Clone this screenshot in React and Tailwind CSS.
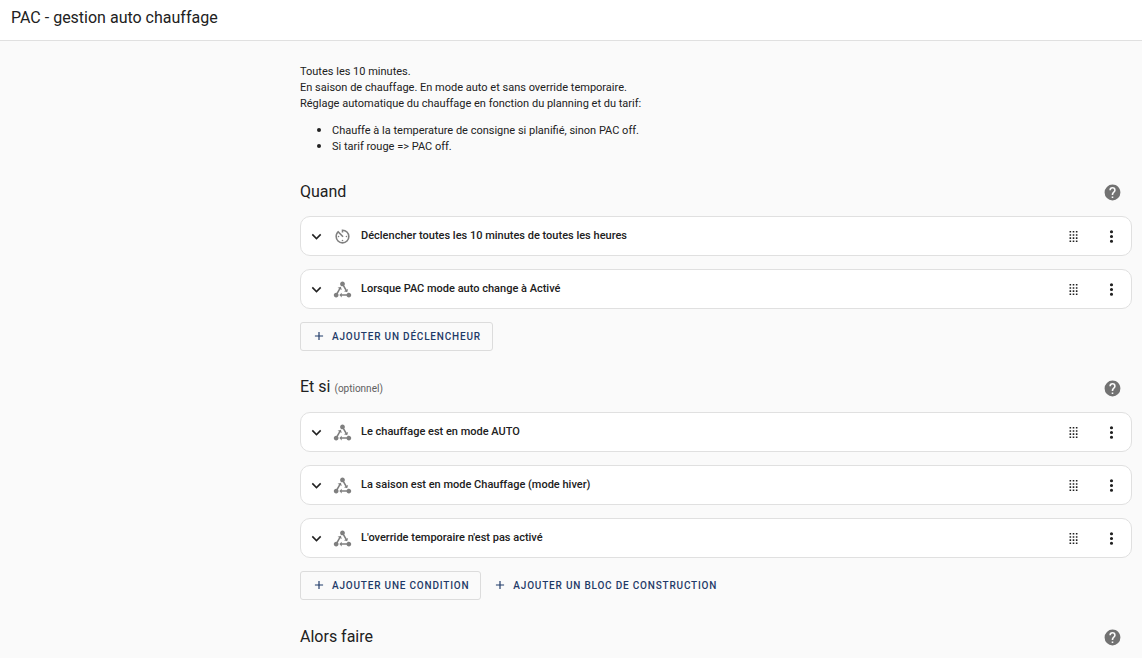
import React from 'react';

const icons = {
  chevronDown: 'M7.41,8.58L12,13.17L16.59,8.58L18,10L12,16L6,10L7.41,8.58Z',
  plus: 'M19,13H13V19H11V13H5V11H11V5H13V11H19V13Z',
  dotsVertical:
    'M12,16A2,2 0 0,1 14,18A2,2 0 0,1 12,20A2,2 0 0,1 10,18A2,2 0 0,1 12,16M12,10A2,2 0 0,1 14,12A2,2 0 0,1 12,14A2,2 0 0,1 10,12A2,2 0 0,1 12,10M12,4A2,2 0 0,1 14,6A2,2 0 0,1 12,8A2,2 0 0,1 10,6A2,2 0 0,1 12,4Z',
  drag: 'M7,19V17H9V19H7M11,19V17H13V19H11M15,19V17H17V19H15M7,15V13H9V15H7M11,15V13H13V15H11M15,15V13H17V15H15M7,11V9H9V11H7M11,11V9H13V11H11M15,11V9H17V11H15M7,7V5H9V7H7M11,7V5H13V7H11M15,7V5H17V7H15Z',
  help: 'M15.07,11.25L14.17,12.17C13.45,12.89 13,13.5 13,15H11V14.5C11,13.39 11.45,12.39 12.17,11.67L13.41,10.41C13.78,10.05 14,9.55 14,9C14,7.89 13.1,7 12,7A2,2 0 0,0 10,9H8A4,4 0 0,1 12,5A4,4 0 0,1 16,9C16,9.88 15.64,10.67 15.07,11.25M13,19H11V17H13M12,2A10,10 0 0,0 2,12A10,10 0 0,0 12,22A10,10 0 0,0 22,12C22,6.47 17.5,2 12,2Z',
  timer:
    'M11,17A1,1 0 0,0 12,18A1,1 0 0,0 13,17A1,1 0 0,0 12,16A1,1 0 0,0 11,17M11,3V7H13V5.08C16.39,5.57 19,8.47 19,12A7,7 0 0,1 12,19A7,7 0 0,1 5,12C5,10.32 5.59,8.78 6.58,7.58L12,13L13.41,11.59L6.61,4.79V4.81C4.42,6.45 3,9.05 3,12A9,9 0 0,0 12,21A9,9 0 0,0 21,12A9,9 0 0,0 12,3M18,12A1,1 0 0,0 17,11A1,1 0 0,0 16,12A1,1 0 0,0 17,13A1,1 0 0,0 18,12M6,12A1,1 0 0,0 7,13A1,1 0 0,0 8,12A1,1 0 0,0 7,11A1,1 0 0,0 6,12Z',
  state:
    'M6.27 17.05C6.72 17.58 7 18.25 7 19C7 20.66 5.66 22 4 22S1 20.66 1 19 2.34 16 4 16C4.18 16 4.36 16 4.53 16.05L7.6 10.69L5.86 9.7L9.95 8.58L11.07 12.67L9.33 11.68L6.27 17.05M20 16C18.7 16 17.6 16.84 17.18 18H11V16L8 19L11 22V20H17.18C17.6 21.16 18.7 22 20 22C21.66 22 23 20.66 23 19S21.66 16 20 16M12 8C12.18 8 12.36 8 12.53 7.95L15.6 13.31L13.86 14.3L17.95 15.42L19.07 11.33L17.33 12.32L14.27 6.95C14.72 6.42 15 5.74 15 5C15 3.34 13.66 2 12 2S9 3.34 9 5 10.34 8 12 8Z',
};

const Icon = ({ name, className = 'size-[19px]' }) => (
  <svg viewBox="0 0 24 24" fill="currentColor" aria-hidden="true" className={`shrink-0 ${className}`}>
    <path d={icons[name]} />
  </svg>
);

const IconButton = ({ name, label, className = '' }) => (
  <button type="button" aria-label={label} className={`cursor-pointer ${className}`}>
    <Icon name={name} />
  </button>
);

const Row = ({ icon, label }) => (
  <li className="flex h-10 items-center rounded-[10px] border border-[#e0e0e0] bg-white pr-2.5 pl-1.5">
    <IconButton name="chevronDown" label="Développer" />
    <Icon name={icon} className="ml-[7px] size-[19px] text-[#7f7f7f]" />
    <h3 className="ml-[9px] min-w-0 flex-1 truncate pb-px text-[11px] leading-4 font-medium">{label}</h3>
    <IconButton name="drag" label="Déplacer" className="mr-[19px]" />
    <IconButton name="dotsVertical" label="Menu" />
  </li>
);

const AddButton = ({ children, outlined }) => (
  <button
    type="button"
    className={`flex h-[29px] cursor-pointer items-center gap-1.5 rounded-[3px] pb-px text-[10px] font-medium tracking-[0.08em] text-[#1f3a68] uppercase ${
      outlined ? 'border border-[#dcdcdc] px-[11px]' : 'px-3'
    }`}
  >
    <Icon name="plus" className="size-3.5" />
    {children}
  </button>
);

const Section = ({ title, optional, rows = [], actions = [] }) => (
  <section className="pt-[19px]">
    <div className="flex h-9 items-center justify-between pr-2.5">
      <h2 className="flex items-baseline gap-1 text-base leading-6">
        {title}
        {optional && <span className="text-[10px] text-[#5f5f5f]">(optionnel)</span>}
      </h2>
      <IconButton name="help" label="Aide" className="text-[#727272]" />
    </div>
    {rows.length > 0 && (
      <ul className="mt-1.5 flex flex-col gap-[13px]">
        {rows.map((row) => (
          <Row key={row.label} {...row} />
        ))}
      </ul>
    )}
    {actions.length > 0 && (
      <div className="mt-[13px] flex flex-wrap">
        {actions.map((action, i) => (
          <AddButton key={action} outlined={i === 0}>
            {action}
          </AddButton>
        ))}
      </div>
    )}
  </section>
);

const triggers = [
  { icon: 'timer', label: 'Déclencher toutes les 10 minutes de toutes les heures' },
  { icon: 'state', label: 'Lorsque PAC mode auto change à Activé' },
];

const conditions = [
  { icon: 'state', label: 'Le chauffage est en mode AUTO' },
  { icon: 'state', label: 'La saison est en mode Chauffage (mode hiver)' },
  { icon: 'state', label: "L'override temporaire n'est pas activé" },
];

const App = () => (
  <div className="min-h-screen bg-[#fafafa] font-['Roboto','Noto_Sans',sans-serif] text-[#212121]">
    <header className="flex h-[41px] items-center border-b border-[#e0e0e0] bg-white px-[11px] pb-1">
      <h1 className="text-base leading-6">PAC - gestion auto chauffage</h1>
    </header>
    <main className="pt-[23px] pr-2.5 pl-[300px]">
      <div className="pb-1 text-[11px] leading-4">
        <p>
          Toutes les 10 minutes.
          <br />
          En saison de chauffage. En mode auto et sans override temporaire.
          <br />
          Réglage automatique du chauffage en fonction du planning et du tarif:
        </p>
        <ul className="mt-[7px] list-disc pl-8 marker:text-sm">
          <li className="h-4">Chauffe à la temperature de consigne si planifié, sinon PAC off.</li>
          <li className="h-4">Si tarif rouge =&gt; PAC off.</li>
        </ul>
      </div>
      <Section title="Quand" rows={triggers} actions={['Ajouter un déclencheur']} />
      <Section
        title="Et si"
        optional
        rows={conditions}
        actions={['Ajouter une condition', 'Ajouter un bloc de construction']}
      />
      <Section title="Alors faire" />
    </main>
  </div>
);

export default App;
